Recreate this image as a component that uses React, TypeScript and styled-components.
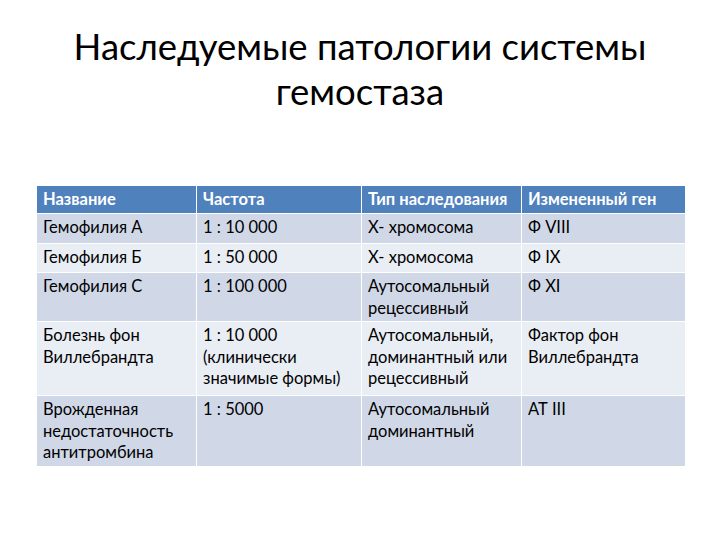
import React from "react";
import styled, { createGlobalStyle } from "styled-components";

const Global = createGlobalStyle`
  html, body { margin: 0; padding: 0; background: #ffffff; }
  body { font-family: Lato, "Open Sans", sans-serif; }
`;

const Slide = styled.div`
  width: 720px;
  height: 540px;
  box-sizing: border-box;
  padding-top: 24px;
  display: flex;
  flex-direction: column;
  align-items: center;
`;

const Title = styled.h1`
  margin: 0;
  width: 600px;
  text-align: center;
  font-family: Lato, "Open Sans", sans-serif;
  font-weight: 400;
  font-size: 36.5px;
  line-height: 45px;
  color: #000;
`;

const Table = styled.div`
  margin-top: 72px;
  width: 648px;
  margin-left: 2px;
  display: grid;
  grid-template-columns: 160px 165px 160px 163px;
`;

const Cell = styled.div<{ $kind: "head" | "odd" | "even" }>`
  box-sizing: border-box;
  padding: 3px 6px 4px 6px;
  font-size: 16.5px;
  line-height: 21.5px;
  white-space: pre-line;
  border-right: 1px solid #ffffff;
  border-bottom: 1px solid #ffffff;
  color: ${(p) => (p.$kind === "head" ? "#ffffff" : "#000000")};
  font-weight: ${(p) => (p.$kind === "head" ? 700 : 400)};
  background: ${(p) =>
    p.$kind === "head" ? "#4f81bd" : p.$kind === "odd" ? "#d0d8e8" : "#e9edf4"};
  &:nth-child(4n) { border-right: none; }
`;

const rows: { h: number; cells: string[] }[] = [
  { h: 30, cells: ["Гемофилия А", "1 : 10 000", "Х- хромосома", "Ф VIII"] },
  { h: 29, cells: ["Гемофилия Б", "1 : 50 000", "Х- хромосома", "Ф IX"] },
  { h: 49, cells: ["Гемофилия С", "1 : 100 000", "Аутосомальный\nрецессивный", "Ф XI"] },
  {
    h: 74,
    cells: [
      "Болезнь фон\nВиллебрандта",
      "1 : 10 000\n(клинически\nзначимые формы)",
      "Аутосомальный,\nдоминантный или\nрецессивный",
      "Фактор фон\nВиллебрандта",
    ],
  },
  {
    h: 71,
    cells: [
      "Врожденная\nнедостаточность\nантитромбина",
      "1 : 5000",
      "Аутосомальный\nдоминантный",
      "АТ III",
    ],
  },
];

const head = ["Название", "Частота", "Тип наследования", "Измененный ген"];

export default function App() {
  return (
    <Slide>
      <Global />
      <Title>Наследуемые патологии системы гемостаза</Title>
      <Table>
        {head.map((t) => (
          <Cell key={t} $kind="head" style={{ height: 28, whiteSpace: "nowrap" }}>
            {t}
          </Cell>
        ))}
        {rows.map((r, i) =>
          r.cells.map((t, j) => (
            <Cell key={`${i}-${j}`} $kind={i % 2 === 0 ? "odd" : "even"} style={{ height: r.h }}>
              {t}
            </Cell>
          ))
        )}
      </Table>
    </Slide>
  );
}
